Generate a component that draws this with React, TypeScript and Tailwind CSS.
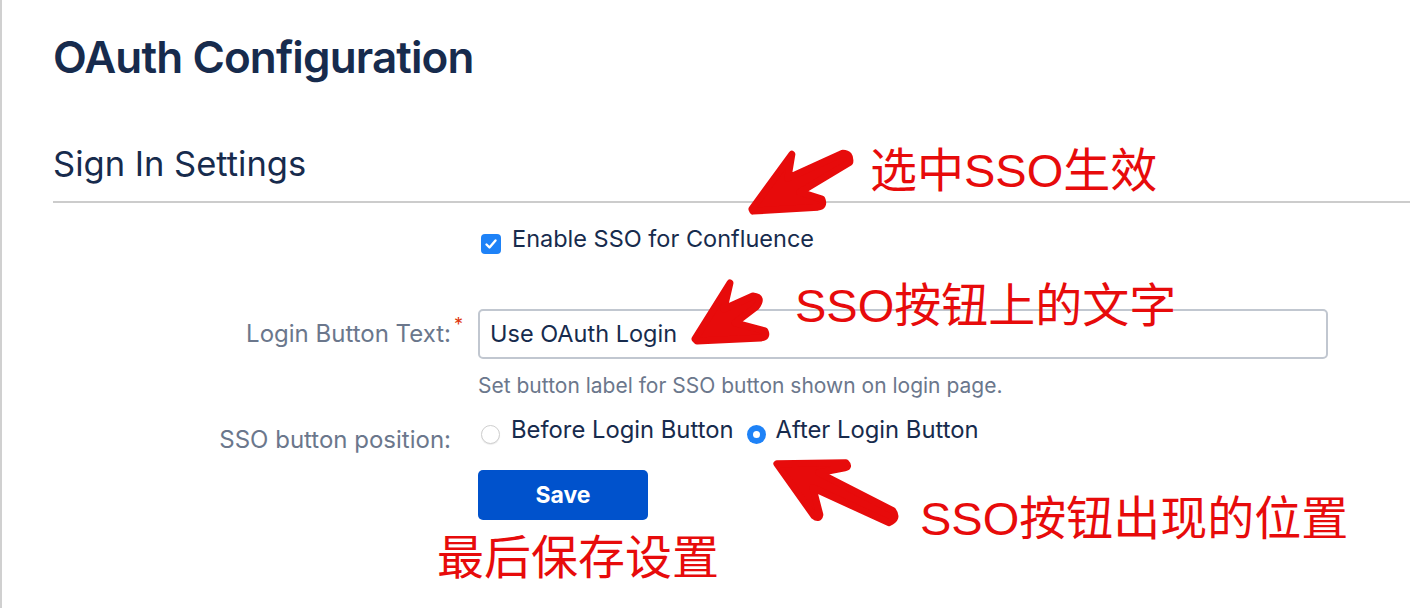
import type { ReactNode } from 'react';

const Note = ({ className, children }: { className: string; children: ReactNode }) => (
  <span
    className={`absolute whitespace-nowrap text-[47px] leading-[47px] text-[#e70b0b] font-[family-name:'Liberation_Sans','Noto_Sans_CJK_SC',sans-serif] ${className}`}
  >
    {children}
  </span>
);

const Arrows = () => (
  <svg className="pointer-events-none absolute inset-0 h-full w-full" viewBox="0 0 1410 608">
    <g fill="#e70b0b" stroke="#e70b0b" strokeWidth={7} strokeLinejoin="round" strokeLinecap="round">
      {/* 选中SSO生效 */}
      <path d="M751 209 L791 154 L787 178 L842 153 Q850 153 849 162 L799 192 L821 199 Q824 206 817 207 L752 211 Z" />
      {/* SSO按钮上的文字 */}
      <path d="M694 339 L729 283 L723 309 L752 296 Q763 297 755 307 L734 323 L764 331 Q767 337 760 338 L696 341 Z" />
      {/* SSO按钮出现的位置 */}
      <path d="M776 464 L845 463 Q849 467 844 468 L818 473 L892 511 Q898 519 888 523 L812 488 L819 515 Q818 520 813 516 Z" />
    </g>
  </svg>
);

export default function App() {
  return (
    <div className="relative h-[608px] w-full overflow-hidden border-l-2 border-[#d0d0d0] bg-white font-[family-name:Inter,'Liberation_Sans',sans-serif]">
      <div className="pl-[51px]">
        <h1 className="pt-[31px] text-[44px] leading-[52px] font-semibold tracking-[-0.02em] text-[#172b4d]">
          OAuth Configuration
        </h1>
        <h2 className="mt-[59px] text-[34.5px] leading-[44px] text-[#172b4d]">Sign In Settings</h2>
        <div className="mt-[15px] border-t-2 border-[#cccccc]" />

        <div className="mt-[22px] flex">
          <div className="w-[398px] shrink-0" />
          <div className="ml-[27px] flex items-start">
            <span className="mt-[9px] ml-[3px] flex h-[20px] w-[20px] items-center justify-center rounded-[4px] bg-[#1e82f7]">
              <svg viewBox="0 0 16 16" className="h-[16px] w-[16px]">
                <path d="M3.5 8.5 L6.5 11.5 L12.5 4.5" fill="none" stroke="#fff" strokeWidth={2.4} strokeLinecap="round" strokeLinejoin="round" />
              </svg>
            </span>
            <span className="ml-[11px] text-[23.5px] leading-[28px] text-[#172b4d]">Enable SSO for Confluence</span>
          </div>
        </div>

        <div className="mt-[55px] flex items-center">
          <div className="w-[398px] shrink-0 text-right text-[24px] leading-[28px] text-[#6b778c]">
            <span className="relative">
              Login Button Text:
              <span className="absolute -top-[8px] left-full ml-[3px] text-[18px] text-[#de350b]">*</span>
            </span>
          </div>
          <div className="ml-[27px] flex h-[50px] w-[850px] items-center rounded-[5px] border-2 border-[#c1c7d0] px-[10px] text-[23.5px] text-[#172b4d]">
            Use OAuth Login
          </div>
        </div>

        <div className="mt-[15px] flex">
          <div className="w-[398px] shrink-0" />
          <div className="ml-[27px] text-[21px] leading-[24px] text-[#6b778c]">
            Set button label for SSO button shown on login page.
          </div>
        </div>

        <div className="mt-[18px] flex items-start">
          <div className="mt-[10px] w-[398px] shrink-0 text-right text-[24px] leading-[28px] text-[#6b778c]">
            SSO button position:
          </div>
          <div className="ml-[27px] flex items-start text-[23.8px] leading-[28px] text-[#172b4d]">
            <span className="mt-[9px] ml-[3px] h-[19px] w-[19px] rounded-full border border-[#cfcfcf] bg-white shadow-[0_1px_1px_rgba(0,0,0,0.08)]" />
            <span className="ml-[11px]">Before Login Button</span>
            <span className="mt-[9px] ml-[13px] flex h-[19px] w-[19px] items-center justify-center rounded-full bg-[#1e82f7]">
              <span className="h-[7px] w-[7px] rounded-full bg-white" />
            </span>
            <span className="ml-[10px]">After Login Button</span>
          </div>
        </div>

        <div className="mt-[16px] flex">
          <div className="w-[398px] shrink-0" />
          <button
            type="button"
            className="ml-[27px] h-[50px] w-[170px] rounded-[5px] bg-[#0052cc] text-[23px] font-bold text-white"
          >
            Save
          </button>
        </div>
      </div>

      <Arrows />
      <Note className="left-[868px] top-[147px]">选中SSO生效</Note>
      <Note className="left-[793px] top-[282px]">SSO按钮上的文字</Note>
      <Note className="left-[918px] top-[495px]">SSO按钮出现的位置</Note>
      <Note className="left-[435px] top-[534px]">最后保存设置</Note>
    </div>
  );
}
